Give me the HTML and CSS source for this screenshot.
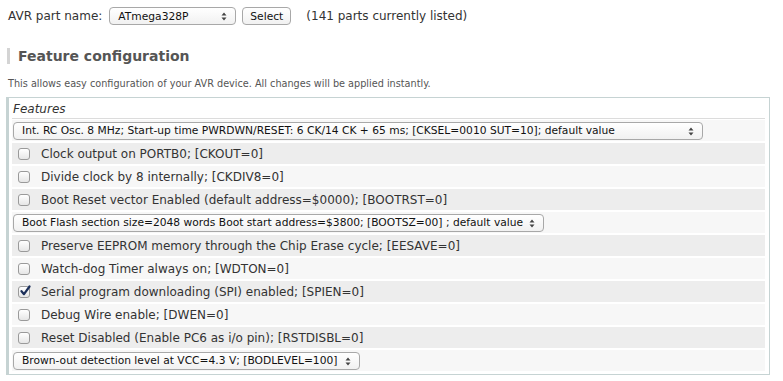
FILE: index.html
```html
<!DOCTYPE html>
<html lang="en">

<head>
    <meta charset="UTF-8">
    <title>AVR Fuse Calculator</title>
    <link rel="stylesheet" href="styles.css">
</head>

<body>
    <!-- part selection -->
    <div class="part-bar">
        <span>AVR part name:</span>
        <span class="select-wrap part-select">
            <span class="select-text">ATmega328P</span>
            <svg class="arrows" width="6" height="9" viewBox="0 0 6 9"><path d="M3 0.5L5.5 3.5H0.5Z M3 8.5L5.5 5.5H0.5Z" fill="#444"/></svg>
        </span>
        <button class="btn">Select</button>
        <span class="count">(141 parts currently listed)</span>
    </div>

    <h2 class="section-title">Feature configuration</h2>
    <p class="hint">This allows easy configuration of your AVR device. All changes will be applied instantly.</p>

    <!-- feature list -->
    <div class="features">
        <div class="legend">Features</div>
        <div class="rows">
            <div class="row">
                <span class="select-wrap wide">
                    <span class="select-text">Int. RC Osc. 8 MHz; Start-up time PWRDWN/RESET: 6 CK/14 CK + 65 ms; [CKSEL=0010 SUT=10]; default value</span>
                    <svg class="arrows" width="6" height="9" viewBox="0 0 6 9"><path d="M3 0.5L5.5 3.5H0.5Z M3 8.5L5.5 5.5H0.5Z" fill="#444"/></svg>
                </span>
            </div>
            <div class="row"><span class="box"></span>Clock output on PORTB0; [CKOUT=0]</div>
            <div class="row"><span class="box"></span>Divide clock by 8 internally; [CKDIV8=0]</div>
            <div class="row"><span class="box"></span>Boot Reset vector Enabled (default address=$0000); [BOOTRST=0]</div>
            <div class="row">
                <span class="select-wrap boot">
                    <span class="select-text">Boot Flash section size=2048 words Boot start address=$3800; [BOOTSZ=00] ; default value</span>
                    <svg class="arrows" width="6" height="9" viewBox="0 0 6 9"><path d="M3 0.5L5.5 3.5H0.5Z M3 8.5L5.5 5.5H0.5Z" fill="#444"/></svg>
                </span>
            </div>
            <div class="row"><span class="box"></span>Preserve EEPROM memory through the Chip Erase cycle; [EESAVE=0]</div>
            <div class="row"><span class="box"></span>Watch-dog Timer always on; [WDTON=0]</div>
            <div class="row">
                <span class="box checked">
                    <svg width="12" height="12" viewBox="0 0 12 12"><path d="M2.5 6.2L5 9.2L10.5 1.5" fill="none" stroke="#1c2f5a" stroke-width="2.2" stroke-linecap="round" stroke-linejoin="round"/></svg>
                </span>Serial program downloading (SPI) enabled; [SPIEN=0]
            </div>
            <div class="row"><span class="box"></span>Debug Wire enable; [DWEN=0]</div>
            <div class="row"><span class="box"></span>Reset Disabled (Enable PC6 as i/o pin); [RSTDISBL=0]</div>
            <div class="row">
                <span class="select-wrap brown">
                    <span class="select-text">Brown-out detection level at VCC=4.3 V; [BODLEVEL=100]</span>
                    <svg class="arrows" width="6" height="9" viewBox="0 0 6 9"><path d="M3 0.5L5.5 3.5H0.5Z M3 8.5L5.5 5.5H0.5Z" fill="#444"/></svg>
                </span>
            </div>
        </div>
    </div>
</body>

</html>
```

FILE: styles.css
```css
body {
    font-family: "DejaVu Sans", Verdana, sans-serif;
    font-size: 12px;
    color: #333;
    background: #fff;
    margin: 0;
    padding: 7px 13px 0 8px;
}

.part-bar {
    display: flex;
    align-items: center;
    height: 18px;
}

.select-wrap {
    position: relative;
    display: inline-flex;
    align-items: center;
    box-sizing: border-box;
    height: 18px;
    padding: 0 20px 0 8px;
    border: 1px solid #a8a8a8;
    border-radius: 4px;
    background: linear-gradient(#ffffff, #f1f1f1);
    font-size: 10.7px;
    color: #111;
    white-space: nowrap;
    overflow: hidden;
}

.select-wrap .arrows {
    position: absolute;
    right: 8px;
    top: 4px;
}

.part-select {
    width: 127px;
    margin-left: 7px;
}

.btn {
    height: 18px;
    width: 49px;
    margin-left: 6px;
    padding: 0;
    border: 1px solid #a8a8a8;
    border-radius: 4px;
    background: linear-gradient(#ffffff, #f1f1f1);
    font-family: inherit;
    font-size: 10.7px;
    color: #111;
}

.count {
    margin-left: 15px;
}

.section-title {
    margin: 23px 0 0 -1px;
    padding-left: 8px;
    border-left: 3px solid #d4d4d4;
    font-size: 14px;
    line-height: 16px;
    color: #555;
}

.hint {
    margin: 14px 0 0 0;
    font-size: 9.7px;
    color: #555;
}

.features {
    margin: 8px 0 0 -2px;
    border: 1px solid #c6d3d3;
    border-left-width: 3px;
    padding: 0 4px 3px 3px;
}

.legend {
    height: 20px;
    line-height: 22px;
    padding-left: 1px;
    border-bottom: 1px solid #dcdcdc;
    font-style: italic;
}

.rows {
    display: flex;
    flex-direction: column;
    gap: 2px;
    padding-top: 1px;
}

.row {
    display: flex;
    align-items: center;
    height: 21px;
    background: #f7f7f7;
}

.row:nth-child(even) {
    background: #ededed;
}

.row .select-wrap {
    margin-left: 1px;
}

.wide {
    width: 690px;
}

.boot {
    width: 531px;
}

.brown {
    width: 347px;
}

.box {
    box-sizing: border-box;
    width: 12px;
    height: 12px;
    margin: 0 11px 0 6px;
    border: 1px solid #9a9a9a;
    border-radius: 3px;
    background: linear-gradient(#ffffff, #e6e6e6);
    position: relative;
}

.box svg {
    position: absolute;
    left: 0;
    top: -2px;
}
```
